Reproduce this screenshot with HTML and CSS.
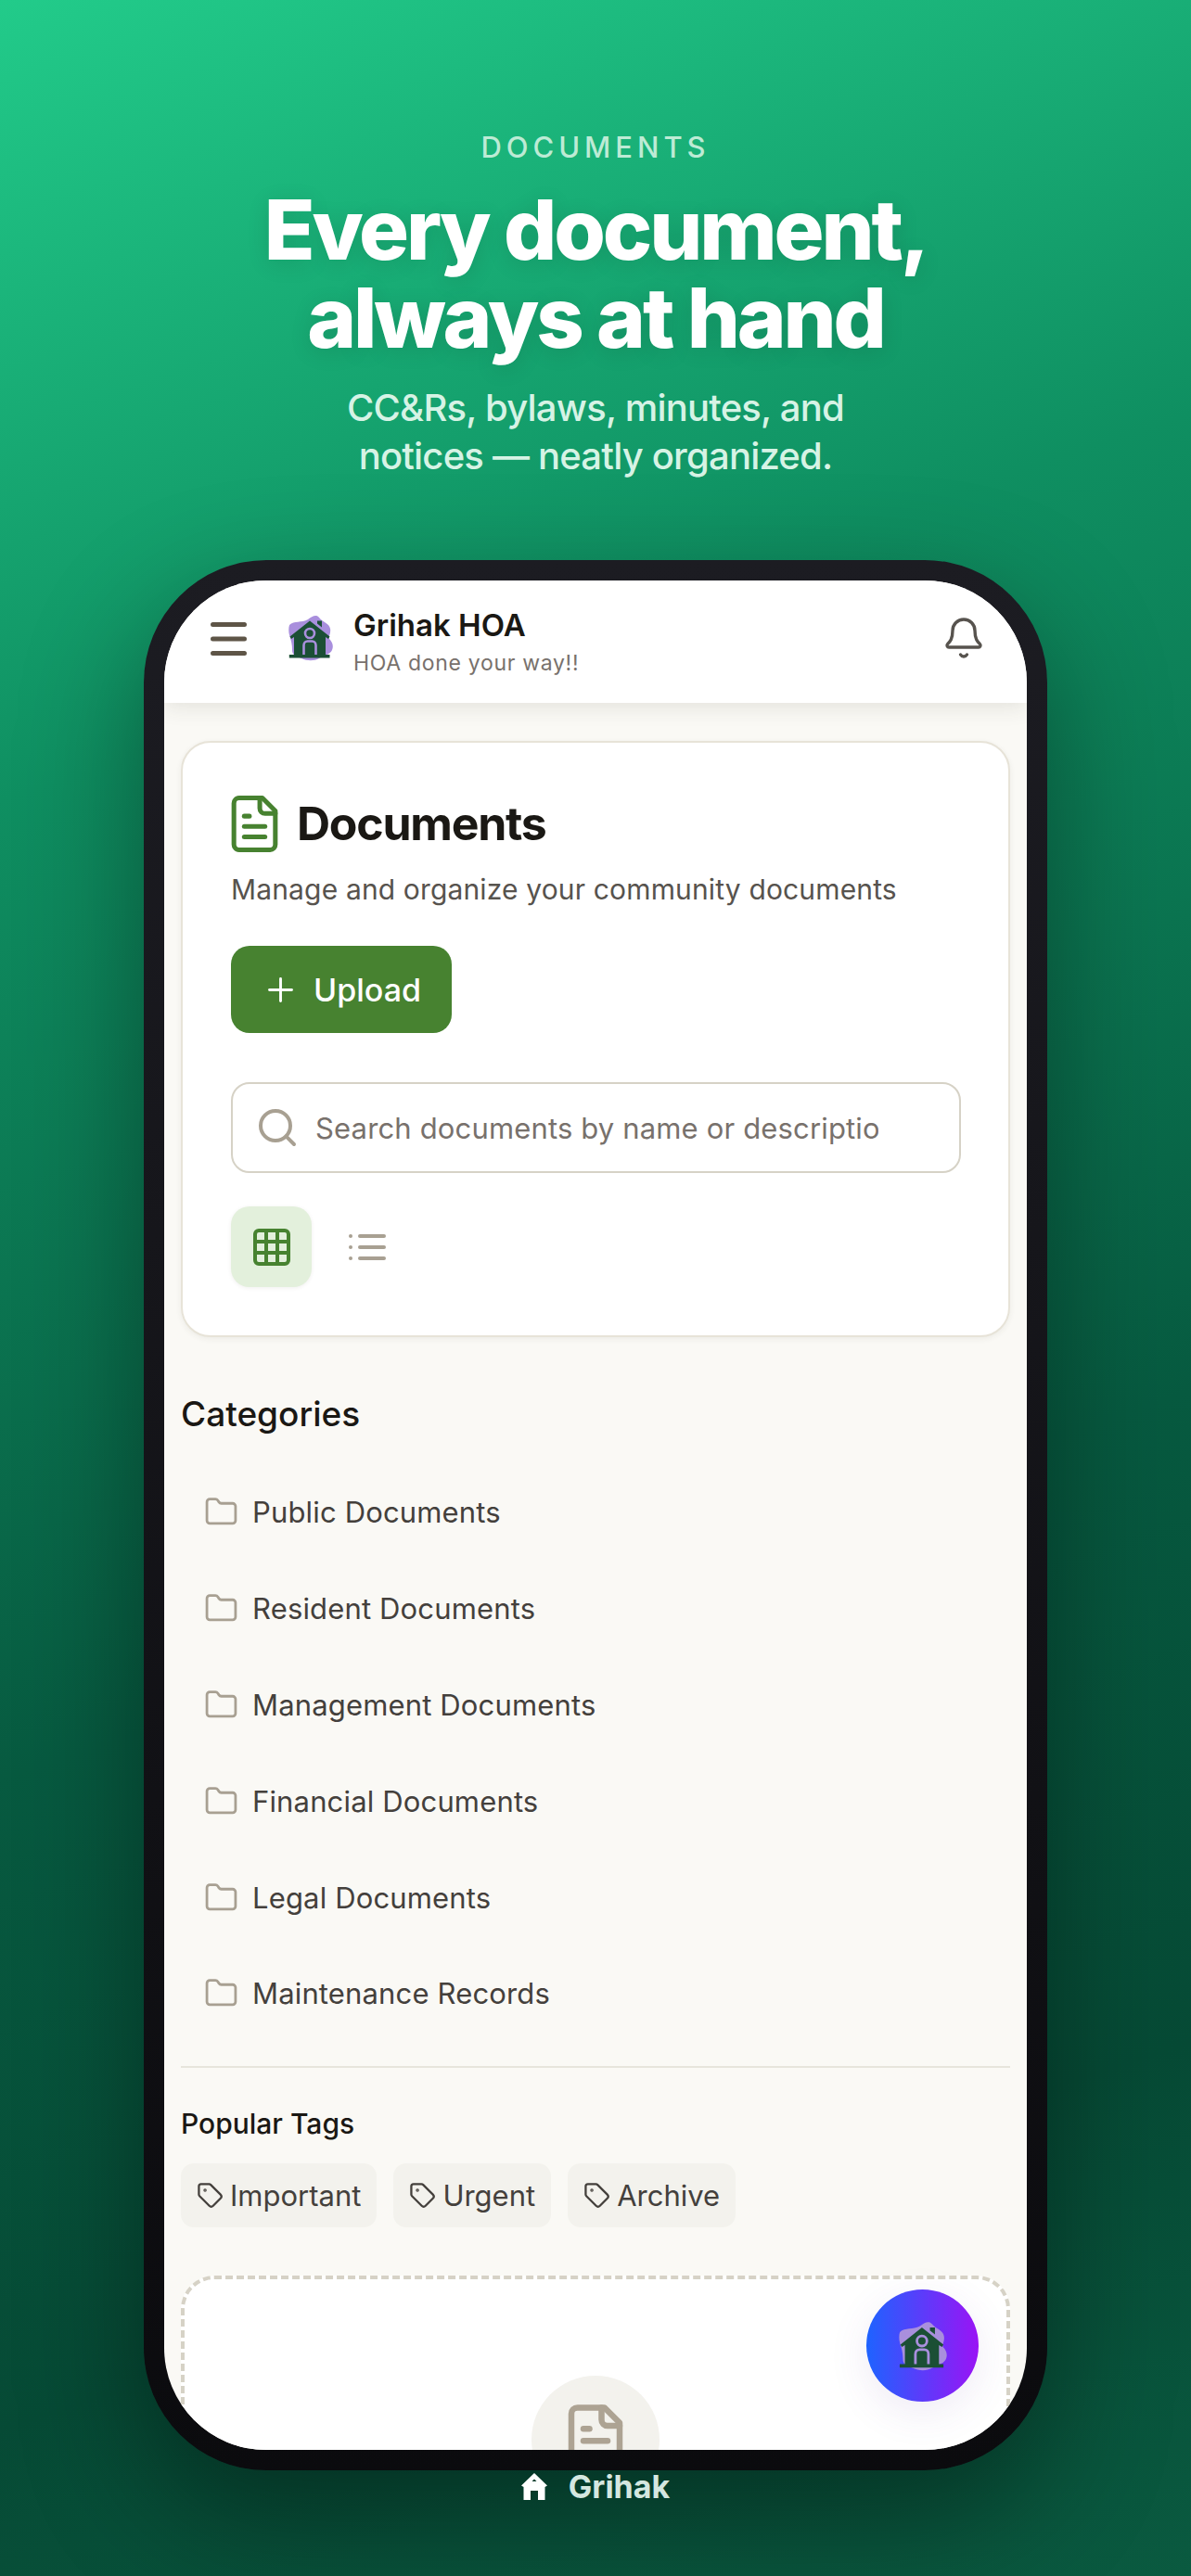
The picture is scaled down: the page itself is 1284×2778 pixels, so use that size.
FILE: index.html
```html
<!DOCTYPE html>
<html lang="en">
<head>
<meta charset="utf-8">
<title>Grihak Documents</title>
<link rel="stylesheet" href="styles.css">
</head>
<body>
<svg class="defs" width="0" height="0" aria-hidden="true">
  <symbol id="logo" viewBox="0 0 48 50">
    <path fill="#a98fdd" d="M1 11C6 6 14 9 21 5C25 2 30-1 33 3C37 8 44 9 45 15C46 20 43 23 44 26C47 29 49 33 47 38C45 43 37 44 33 47C28 50 20 50 14 47C9 45 4 44 4 38C4 32 3 28 1 22C0 18 0 14 1 11Z"/>
    <path fill="#1b4f35" d="M31 6.500h5v7l-5-4zM23 6.500 44.500 23.500 43 26 40 24V43H44.500V46.500H.8V43H6V24L3 26 1.500 23.500Z"/>
    <circle cx="23" cy="20" r="5" fill="none" stroke="#a98fdd" stroke-width="2.600"/>
    <path fill="none" stroke="#a98fdd" stroke-width="2.600" d="M16.500 43V33C16.500 30 18.500 28.500 20.500 28.500H25.500C27.500 28.500 29.500 30 29.500 33V43"/>
  </symbol>
  <symbol id="file" viewBox="0 0 24 24">
    <path d="M15 2H6a2 2 0 0 0-2 2v16a2 2 0 0 0 2 2h12a2 2 0 0 0 2-2V7Z"/><path d="M14 2v4a2 2 0 0 0 2 2h4"/><path d="M10 9H8"/><path d="M16 13H8"/><path d="M16 17H8"/>
  </symbol>
  <symbol id="folder" viewBox="0 0 24 24">
    <path d="M20 20a2 2 0 0 0 2-2V8a2 2 0 0 0-2-2h-7.900a2 2 0 0 1-1.690-.9L9.600 3.900A2 2 0 0 0 7.930 3H4a2 2 0 0 0-2 2v13a2 2 0 0 0 2 2Z"/>
  </symbol>
  <symbol id="tag" viewBox="0 0 24 24">
    <path d="M12.586 2.586A2 2 0 0 0 11.172 2H4a2 2 0 0 0-2 2v7.172a2 2 0 0 0 .586 1.414l8.704 8.704a2.426 2.426 0 0 0 3.420 0l6.580-6.580a2.426 2.426 0 0 0 0-3.420z"/><circle cx="7.500" cy="7.500" r=".5"/>
  </symbol>
</svg>

<main class="poster">
  <header class="hero">
    <p class="eyebrow">DOCUMENTS</p>
    <h1 class="headline">Every document,<br>always at hand</h1>
    <p class="lede">CC&amp;Rs, bylaws, minutes, and<br>notices — neatly organized.</p>
  </header>

  <section class="phone">
    <div class="screen">
      <header class="appbar">
        <svg class="menu-icon" viewBox="0 0 39 36"><path d="M2.500 2.500H36.500M2.500 18H36.500M2.500 33.500H36.500"/></svg>
        <svg class="brand-logo"><use href="#logo"/></svg>
        <div class="brand-text">
          <div class="brand-name">Grihak HOA</div>
          <div class="brand-tag">HOA done your way!!</div>
        </div>
        <svg class="bell icon" viewBox="0 0 24 24"><path d="M10.268 21a2 2 0 0 0 3.464 0"/><path d="M3.262 15.326A1 1 0 0 0 4 17h16a1 1 0 0 0 .74-1.673C19.410 13.956 18 12.499 18 8A6 6 0 0 0 6 8c0 4.499-1.411 5.956-2.738 7.326"/></svg>
      </header>

      <div class="content">
        <section class="card">
          <div class="card-title">
            <svg class="title-icon icon"><use href="#file"/></svg>
            <h2>Documents</h2>
          </div>
          <p class="card-desc">Manage and organize your community documents</p>
          <button class="upload" type="button">
            <svg class="plus icon" viewBox="0 0 24 24"><path d="M5 12h14"/><path d="M12 5v14"/></svg>
            <span>Upload</span>
          </button>
          <label class="search">
            <svg class="search-icon icon" viewBox="0 0 24 24"><circle cx="11" cy="11" r="8"/><path d="m21 21-4.300-4.300"/></svg>
            <input type="text" placeholder="Search documents by name or description">
          </label>
          <div class="view-toggle">
            <span class="view-btn view-active">
              <svg class="view-icon icon" viewBox="0 0 24 24"><rect x="3" y="3" width="18" height="18" rx="2"/><path d="M3 9h18"/><path d="M3 15h18"/><path d="M9 3v18"/><path d="M15 3v18"/></svg>
            </span>
            <span class="view-btn">
              <svg class="view-icon icon" viewBox="0 0 24 24"><path d="M3 6h.01"/><path d="M3 12h.01"/><path d="M3 18h.01"/><path d="M8 6h13"/><path d="M8 12h13"/><path d="M8 18h13"/></svg>
            </span>
          </div>
        </section>

        <h3 class="section-title">Categories</h3>
        <ul class="categories">
          <li><svg class="folder icon"><use href="#folder"/></svg>Public Documents</li>
          <li><svg class="folder icon"><use href="#folder"/></svg>Resident Documents</li>
          <li><svg class="folder icon"><use href="#folder"/></svg>Management Documents</li>
          <li><svg class="folder icon"><use href="#folder"/></svg>Financial Documents</li>
          <li><svg class="folder icon"><use href="#folder"/></svg>Legal Documents</li>
          <li><svg class="folder icon"><use href="#folder"/></svg>Maintenance Records</li>
        </ul>

        <div class="tags-section">
          <h4 class="tags-title">Popular Tags</h4>
          <div class="tags">
            <span class="tag"><svg class="tag-icon icon"><use href="#tag"/></svg>Important</span>
            <span class="tag"><svg class="tag-icon icon"><use href="#tag"/></svg>Urgent</span>
            <span class="tag"><svg class="tag-icon icon"><use href="#tag"/></svg>Archive</span>
          </div>
        </div>

        <div class="dropzone">
          <span class="drop-circle">
            <svg class="drop-icon icon"><use href="#file"/></svg>
          </span>
        </div>
      </div>

      <button class="fab" type="button" aria-label="Grihak assistant">
        <svg class="fab-logo"><use href="#logo"/></svg>
      </button>
    </div>
  </section>

  <footer class="footer-brand">
    <svg class="footer-home" viewBox="0 0 28 29"><path fill-rule="evenodd" d="M14 0 28 13.500 25.500 15V29H18V19H10V29H2.500V15L0 13.500ZM14 6.500 11.500 9H16.500Z"/></svg>
    <span>Grihak</span>
  </footer>
</main>
</body>
</html>
```

FILE: styles.css
```css
* { box-sizing: border-box; }

html, body {
  margin: 0;
  padding: 0;
}

body {
  width: 1284px;
  height: 2778px;
  overflow: hidden;
  font-family: Inter, "Liberation Sans", sans-serif;
  background: linear-gradient(162deg, #22cb8a 0%, #0f8f61 27%, #075a40 60%, #064a35 82%, #0a5a40 100%);
}

.defs { position: absolute; }

.poster {
  display: flex;
  flex-direction: column;
  align-items: center;
}

.hero {
  display: flex;
  flex-direction: column;
  align-items: center;
  text-align: center;
  padding-top: 140px;
  height: 604px;
}

.eyebrow {
  margin: 0;
  font-size: 31px;
  line-height: 38px;
  font-weight: 500;
  letter-spacing: 0.16em;
  color: #bdebd5;
}

.headline {
  margin: 22px 0 0;
  font-size: 90px;
  line-height: 95px;
  font-weight: 800;
  letter-spacing: -0.035em;
  color: #fff;
  text-shadow: 0 4px 24px rgba(0, 0, 0, 0.12);
}

.lede {
  margin: 24px 0 0;
  font-size: 40px;
  line-height: 52px;
  font-weight: 500;
  letter-spacing: -0.02em;
  color: #d6f3e5;
}

.phone {
  width: 974px;
  height: 2060px;
  padding: 22px;
  flex: none;
  border-radius: 132px;
  background: linear-gradient(180deg, #1c1c22 0%, #0b0b0e 100%);
  box-shadow: 0 50px 130px rgba(0, 0, 0, 0.38);
}

.screen {
  position: relative;
  height: 100%;
  overflow: hidden;
  border-radius: 110px;
  background: #faf9f5;
}

.icon {
  fill: none;
  stroke: currentColor;
  stroke-width: 2;
  stroke-linecap: round;
  stroke-linejoin: round;
  flex: none;
}

.appbar {
  position: relative;
  z-index: 1;
  display: flex;
  align-items: center;
  height: 132px;
  padding: 0 44px 0 50px;
  background: #fff;
  box-shadow: 0 4px 22px rgba(60, 55, 40, 0.12);
}

.menu-icon {
  width: 39px;
  height: 36px;
  flex: none;
  margin-top: -6px;
  fill: none;
  stroke: #5e5547;
  stroke-width: 5;
  stroke-linecap: round;
}

.brand-logo {
  width: 48px;
  height: 52px;
  flex: none;
  margin: -8px 22px 0 45px;
}

.brand-text {
  flex: 1;
  margin-top: -2px;
}

.brand-name {
  font-size: 33px;
  line-height: 42px;
  font-weight: 600;
  color: #1a1814;
}

.brand-tag {
  margin-top: 6px;
  font-size: 23px;
  line-height: 28px;
  letter-spacing: 0.03em;
  color: #78716c;
}

.bell {
  width: 48px;
  height: 48px;
  margin-top: -8px;
  color: #57534e;
  stroke-width: 1.700;
}

.content {
  padding: 41px 18px 0;
}

.card {
  width: 894px;
  height: 643px;
  padding: 52px 52px 0;
  border: 2px solid #e7e3d8;
  border-radius: 32px;
  background: #fff;
  box-shadow: 0 2px 6px rgba(60, 55, 40, 0.07);
}

.card-title {
  display: flex;
  align-items: center;
  gap: 12px;
  height: 70px;
  margin-left: -8px;
}

.title-icon {
  width: 67px;
  height: 67px;
  color: #478230;
  stroke-width: 1.800;
}

.card-title h2 {
  margin: 0;
  font-size: 50px;
  line-height: 60px;
  font-weight: 700;
  letter-spacing: -0.025em;
  color: #1a1814;
}

.card-desc {
  margin: 17px 0 0;
  font-size: 30px;
  line-height: 38px;
  letter-spacing: 0.005em;
  color: #57534e;
}

.upload {
  display: flex;
  align-items: center;
  justify-content: center;
  gap: 15px;
  width: 238px;
  height: 94px;
  margin-top: 42px;
  padding: 0;
  border: 0;
  border-radius: 20px;
  background: #478230;
  color: #fff;
  font-family: inherit;
  font-size: 34px;
  font-weight: 500;
}

.plus {
  width: 41px;
  height: 41px;
  stroke-width: 1.700;
}

.search {
  display: flex;
  align-items: center;
  gap: 17px;
  width: 787px;
  height: 98px;
  margin-top: 53px;
  padding: 0 87px 0 24px;
  border: 2.500px solid #d6d2c6;
  border-radius: 20px;
  background: #fff;
}

.search-icon {
  width: 48px;
  height: 48px;
  color: #a8a092;
}

.search input {
  flex: 1;
  min-width: 0;
  padding: 0;
  border: 0;
  outline: 0;
  background: transparent;
  font-family: inherit;
  font-size: 31px;
  letter-spacing: 0.005em;
  color: #1a1814;
}

.search input::placeholder {
  color: #78716c;
  opacity: 1;
}

.view-toggle {
  display: flex;
  gap: 16px;
  margin-top: 36px;
}

.view-btn {
  display: flex;
  align-items: center;
  justify-content: center;
  width: 87px;
  height: 87px;
  border-radius: 20px;
  color: #a8a092;
}

.view-active {
  background: #e3f0dc;
  color: #478230;
  box-shadow: 0 1px 4px rgba(60, 55, 40, 0.08);
}

.view-icon {
  width: 48px;
  height: 48px;
}

.section-title {
  margin: 60px 0 0;
  font-size: 37px;
  line-height: 46px;
  font-weight: 500;
  color: #1a1814;
}

.categories {
  margin: 31px 0 0;
  padding: 0;
  list-style: none;
}

.categories li {
  display: flex;
  align-items: center;
  gap: 15px;
  height: 103.800px;
  padding-left: 25px;
  font-size: 31px;
  letter-spacing: 0.005em;
  color: #44403c;
}

.folder {
  width: 37px;
  height: 37px;
  color: #a8a092;
  stroke-width: 1.800;
}

.tags-section {
  margin-top: 26px;
  padding-top: 40px;
  border-top: 2px solid #e7e5dc;
}

.tags-title {
  margin: 0;
  font-size: 30px;
  line-height: 40px;
  font-weight: 500;
  color: #1a1814;
}

.tags {
  display: flex;
  gap: 18px;
  margin-top: 23px;
}

.tag {
  display: flex;
  align-items: center;
  gap: 7px;
  height: 69px;
  padding: 0 17px;
  border-radius: 14px;
  background: #f3f2ed;
  font-size: 31px;
  color: #44403c;
}

.tag-icon {
  width: 29px;
  height: 29px;
  stroke-width: 1.900;
}

.dropzone {
  display: flex;
  justify-content: center;
  width: 894px;
  height: 500px;
  margin-top: 52px;
  padding-top: 104px;
  border: 4px dashed #d6d2c6;
  border-radius: 36px;
  background: #fff;
}

.drop-circle {
  display: flex;
  justify-content: center;
  width: 138px;
  height: 138px;
  padding-top: 28px;
  border-radius: 50%;
  background: #f3f2ed;
}

.drop-icon {
  width: 78px;
  height: 78px;
  color: #ada393;
  stroke-width: 2;
}

.fab {
  position: absolute;
  left: 757px;
  top: 1843px;
  display: flex;
  align-items: center;
  justify-content: center;
  width: 121px;
  height: 121px;
  padding: 0;
  border: 0;
  border-radius: 50%;
  background: linear-gradient(90deg, #1e63ff 0%, #9a14f5 100%);
  box-shadow: 0 12px 44px rgba(100, 60, 160, 0.1);
}

.fab-logo {
  width: 52px;
  height: 54px;
}

.footer-brand {
  display: flex;
  align-items: center;
  gap: 23px;
  height: 34px;
  margin-top: 0;
  font-size: 34px;
  font-weight: 700;
  color: #d5e7e0;
}

.footer-home {
  width: 28px;
  height: 29px;
  fill: #fff;
}
```
